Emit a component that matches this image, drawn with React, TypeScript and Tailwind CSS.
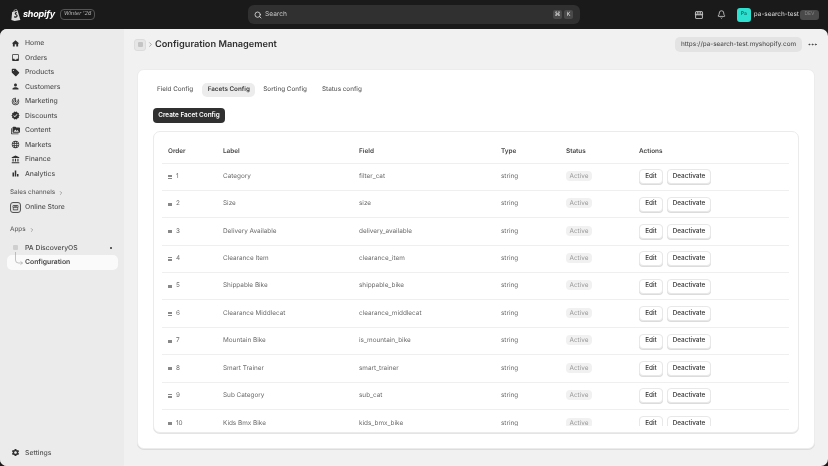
import { Search, Bell, ChevronRight, Ellipsis } from 'lucide-react'
import { MdHome, MdInbox, MdSell, MdPerson, MdTrackChanges, MdSettings, MdPermMedia, MdLanguage, MdAccountBalance, MdBarChart, MdStorefront, MdVerified } from 'react-icons/md'

const font = { fontFamily: 'Inter, "Liberation Sans", sans-serif' }

const nav = [
  { label: 'Home', icon: MdHome },
  { label: 'Orders', icon: MdInbox },
  { label: 'Products', icon: MdSell },
  { label: 'Customers', icon: MdPerson },
  { label: 'Marketing', icon: MdTrackChanges },
  { label: 'Discounts', icon: MdVerified },
  { label: 'Content', icon: MdPermMedia },
  { label: 'Markets', icon: MdLanguage },
  { label: 'Finance', icon: MdAccountBalance },
  { label: 'Analytics', icon: MdBarChart },
]

const rows = [
  ['1', 'Category', 'filter_cat'],
  ['2', 'Size', 'size'],
  ['3', 'Delivery Available', 'delivery_available'],
  ['4', 'Clearance Item', 'clearance_item'],
  ['5', 'Shippable Bike', 'shippable_bike'],
  ['6', 'Clearance Middlecat', 'clearance_middlecat'],
  ['7', 'Mountain Bike', 'is_mountain_bike'],
  ['8', 'Smart Trainer', 'smart_trainer'],
  ['9', 'Sub Category', 'sub_cat'],
  ['10', 'Kids Bmx Bike', 'kids_bmx_bike'],
]

function ShopifyBag() {
  return (
    <svg width="10" height="12" viewBox="0 0 18 22">
      <path d="M2 5.5 L12 3 L17 20 L6.5 22 L0.5 20 Z" fill="#d8d8d8" />
      <path d="M5 6 C5 2 7 0.5 8.5 0.5 C10.5 0.5 11 2.5 11 4" fill="none" stroke="#d8d8d8" strokeWidth="1.2" />
      <path d="M11 6.2 C9.2 5.6 6.6 6.2 6.6 8.4 C6.6 10.8 10 10.6 10 12.6 C10 14 8 14 6 13 L5.6 15.4 C8 16.6 12 16 12 12.6 C12 10 8.8 10 8.8 8.6 C8.8 7.8 9.8 7.6 10.6 8 Z" fill="#1a1a1a" />
    </svg>
  )
}

function NavItem({ label, icon: Icon }: { label: string; icon: typeof MdHome }) {
  return (
    <div className="flex h-[14.5px] items-center gap-[5px] pl-[11px]">
      <Icon className="h-[9px] w-[9px] text-[#303030]" />
      <span className="text-[6.8px] font-medium text-[#555]">{label}</span>
    </div>
  )
}

function Sidebar() {
  return (
    <aside className="flex w-[124px] shrink-0 flex-col bg-[#ebebeb] pb-[6px] pt-[7px]">
      {nav.map((n) => (
        <NavItem key={n.label} label={n.label} icon={n.icon} />
      ))}
      <div className="mt-[5px] flex h-[14px] items-center gap-[3px] pl-[10px] text-[6.3px] font-medium text-[#666]">
        Sales channels <ChevronRight className="h-[6px] w-[6px]" />
      </div>
      <div className="flex h-[14.5px] items-center gap-[4px] pl-[10px]">
        <span className="flex h-[11px] w-[11px] items-center justify-center rounded-[3px] border border-[#555] bg-[#e0e0e0]">
          <MdStorefront className="h-[7px] w-[7px] text-[#303030]" />
        </span>
        <span className="text-[6.8px] font-medium text-[#555]">Online Store</span>
      </div>
      <div className="mt-[8px] flex h-[14px] items-center gap-[3px] pl-[10px] text-[6.3px] font-medium text-[#666]">
        Apps <ChevronRight className="h-[6px] w-[6px]" />
      </div>
      <div className="mt-[4px] flex h-[14.5px] items-center gap-[5px] pl-[11px] pr-[12px]">
        <span className="ml-[2px] mr-[2px] h-[5px] w-[5px] rounded-[1px] bg-[#cfcfcf]" />
        <span className="flex-1 text-[6.8px] font-medium text-[#4a4a4a]">PA DiscoveryOS</span>
        <span className="h-[2px] w-[2px] rounded-full bg-[#303030]" />
      </div>
      <div className="ml-[7px] mr-[6px] flex h-[14.5px] items-center gap-[1px] rounded-[5px] bg-[#fafafa] pl-[8px]">
        <svg width="9" height="14" viewBox="0 0 9 14" className="overflow-visible">
          <path d="M0.5 -3 V5 Q0.5 8 3.5 8 H7.5 M5.5 6.4 L7.5 8 L5.5 9.6" fill="none" stroke="#a8a8a8" strokeWidth="0.7" />
        </svg>
        <span className="text-[6.8px] font-semibold text-[#444]">Configuration</span>
      </div>
      <div className="mt-auto flex h-[14.5px] items-center gap-[5px] pl-[11px]">
        <MdSettings className="h-[9px] w-[9px] text-[#303030]" />
        <span className="text-[6.8px] font-medium text-[#555]">Settings</span>
      </div>
    </aside>
  )
}

function TopBar() {
  return (
    <header className="flex h-[29px] shrink-0 items-center bg-[#1a1a1a] pl-[11px] pr-[9px]">
      <div className="flex w-[237px] items-center">
        <ShopifyBag />
        <span className="ml-[2px] text-[9px] font-bold italic tracking-[-0.2px] text-white">shopify</span>
        <span className="ml-[5px] rounded-[4px] border border-[#555] px-[3px] text-[5.6px] italic leading-[9px] text-[#bbb]">Winter '26</span>
      </div>
      <div className="flex h-[19px] w-[332px] items-center rounded-[6px] bg-[#303030] pl-[6px] pr-[7px]">
        <Search className="h-[8px] w-[8px] text-[#ddd]" strokeWidth={2.5} />
        <span className="ml-[3px] flex-1 text-[6.6px] text-[#c0c0c0]">Search</span>
        <span className="flex h-[9px] w-[9px] items-center justify-center rounded-[2px] bg-[#4a4a4a] text-[6px] text-[#ddd]">⌘</span>
        <span className="ml-[2px] flex h-[9px] w-[9px] items-center justify-center rounded-[2px] bg-[#4a4a4a] text-[6px] text-[#ddd]">K</span>
      </div>
      <div className="ml-auto flex items-center">
        <MdStorefront className="h-[10px] w-[10px] text-[#ddd]" />
        <Bell className="ml-[13px] h-[9px] w-[9px] text-[#ddd]" />
        <span className="ml-[11px] flex h-[14px] w-[14px] items-center justify-center rounded-[3px] bg-[#2ee0d0] text-[5px] font-semibold text-[#0a6b64]">Pa</span>
        <span className="ml-[3px] text-[6.3px] font-medium text-[#c8c8c8]">pa-search-test</span>
        <span className="ml-[1px] flex h-[10px] w-[19px] items-center justify-center rounded-[3px] bg-[#4a4a4a] text-[5px] text-[#888]">DEV</span>
      </div>
    </header>
  )
}

function FacetRow({ row, last }: { row: string[]; last: boolean }) {
  return (
    <tr className={last ? '' : 'border-b border-[#efefef]'}>
      <td className="h-[27.4px] pl-[6px]">
        <span className="flex items-center gap-[4px]">
          <span className="flex w-[4px] flex-col gap-[0.6px]">
            <span className="h-[0.6px] bg-[#888]" />
            <span className="h-[0.6px] bg-[#888]" />
            <span className="h-[0.6px] bg-[#888]" />
          </span>
          {row[0]}
        </span>
      </td>
      <td>{row[1]}</td>
      <td>{row[2]}</td>
      <td>string</td>
      <td>
        <span className="rounded-[4px] bg-[#f1f1f1] px-[3.5px] py-[1px] text-[#999]">Active</span>
      </td>
      <td>
        <span className="flex gap-[4px] font-medium text-[#303030]">
          <button className="h-[15px] w-[24px] rounded-[4px] border border-[#e8e8e8] bg-white shadow-[0_1px_0_#dcdcdc]">Edit</button>
          <button className="h-[15px] w-[44px] rounded-[4px] border border-[#e8e8e8] bg-white shadow-[0_1px_0_#dcdcdc]">Deactivate</button>
        </span>
      </td>
    </tr>
  )
}

function FacetTable() {
  return (
    <div className="mt-[8px] h-[302px] overflow-hidden rounded-[7px] border border-[#ebebeb] bg-white pl-[8px] pr-[9px] pt-[9px] shadow-[0_1px_0_#e4e4e4]">
      <div className="h-[285px] overflow-hidden">
        <table className="w-full table-fixed text-left text-[6.4px] text-[#6b6b6b]">
          <colgroup>
            <col className="w-[61px]" />
            <col className="w-[136px]" />
            <col className="w-[142px]" />
            <col className="w-[65px]" />
            <col className="w-[73px]" />
            <col />
          </colgroup>
          <thead>
            <tr className="border-b border-[#efefef] text-[#484848]">
              <th className="h-[22px] pl-[6px] font-semibold">Order</th>
              <th className="font-semibold">Label</th>
              <th className="font-semibold">Field</th>
              <th className="font-semibold">Type</th>
              <th className="font-semibold">Status</th>
              <th className="font-semibold">Actions</th>
            </tr>
          </thead>
          <tbody>
            {rows.map((r, i) => (
              <FacetRow key={r[0]} row={r} last={i === rows.length - 1} />
            ))}
          </tbody>
        </table>
      </div>
    </div>
  )
}

export default function App() {
  return (
    <div className="flex h-screen flex-col overflow-hidden bg-[#1a1a1a] [text-rendering:geometricPrecision] [will-change:transform]" style={font}>
      <TopBar />
      <div className="flex min-h-0 flex-1 overflow-hidden rounded-[7px] bg-[#f1f1f1]">
        <Sidebar />
        <main className="flex min-w-0 flex-1 flex-col px-[13px] pt-[9px]">
          <div className="-ml-[3px] -mr-[3px] flex h-[13px] items-center">
            <span className="flex h-[12px] w-[12px] items-center justify-center rounded-[3px] border border-[#dcdcdc] bg-[#e6e6e6]">
              <span className="h-[5px] w-[5px] rounded-[1px] bg-[#c4c4c4]" />
            </span>
            <ChevronRight className="ml-[1px] h-[7px] w-[7px] text-[#777]" />
            <h1 className="ml-[1px] text-[9.2px] font-semibold text-[#303030]">Configuration Management</h1>
            <span className="ml-auto flex h-[15px] w-[127px] items-center justify-center rounded-[5px] bg-[#e3e3e3] text-[6.3px] font-medium text-[#555]">https://pa-search-test.myshopify.com</span>
            <Ellipsis className="ml-[5px] mr-[0px] h-[11px] w-[11px] text-[#404040]" />
          </div>
          <section className="mt-[18px] h-[380px] rounded-[7px] border border-[#ececec] bg-white px-[15px] pt-[12px] shadow-[0_1px_0_#dcdcdc]">
            <div className="flex h-[15px] items-center text-[6.3px] font-medium text-[#616161]">
              <span className="pl-[4px] pr-[4px]">Field Config</span>
              <span className="ml-[5px] flex h-[14px] w-[53px] items-center justify-center rounded-[5px] bg-[#ececec] font-semibold text-[#404040]">Facets Config</span>
              <span className="ml-[8px]">Sorting Config</span>
              <span className="ml-[15px]">Status config</span>
            </div>
            <button className="mt-[11px] block h-[15px] w-[72px] rounded-[4px] bg-[#303030] text-[6.4px] font-semibold text-white">Create Facet Config</button>
            <FacetTable />
          </section>
        </main>
      </div>
    </div>
  )
}
